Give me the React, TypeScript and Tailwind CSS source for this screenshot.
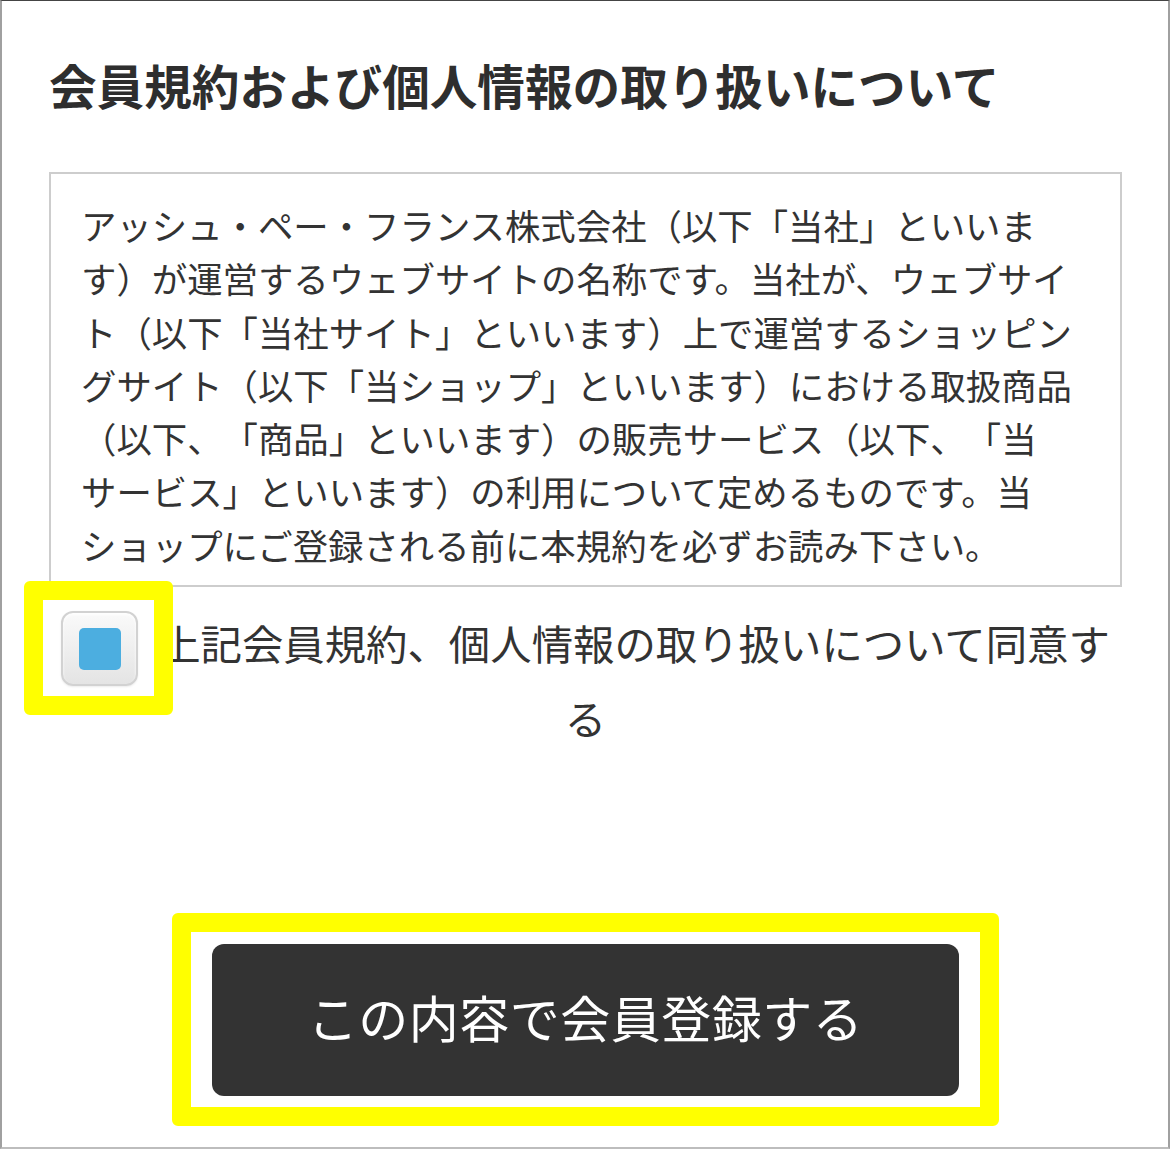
import React from "react";

// 会員登録フォーム末尾：規約表示・同意チェック・登録ボタン（注釈の黄色枠つき）
const FONT = "font-['Noto_Sans_CJK_JP','Noto_Sans',sans-serif]";

function YellowFrame({ className }: { className: string }) {
  // スクリーンショット上の注釈枠。内容の上に重ねるだけなので absolute。
  return (
    <span
      aria-hidden="true"
      className={`pointer-events-none absolute rounded-[6px] border-[19px] border-[#ffff00] ${className}`}
    />
  );
}

export default function App() {
  return (
    <div
      lang="ja"
      className={`${FONT} h-[1149px] w-full border-x-2 border-b-2 border-t border-[#a0a0a0] border-t-[#444] border-b-[#bdbdbd] bg-white text-[#333] [text-spacing-trim:space-all] [line-break:strict]`}
    >
      <div className="ml-[47px] mr-[46px] pt-[49px]">
        <h2 className="text-[47.6px] font-bold leading-[70px] tracking-normal text-[#2e2e2e]">
          会員規約および個人情報の取り扱いについて
        </h2>

        <div className="mt-[52px] h-[415px] overflow-hidden border-2 border-[#cdcdcd] pl-[30px] pr-[30px] pt-[24px]">
          <p lang="ja" className="text-[35.4px] leading-[53.3px] text-[#333] [line-break:strict]">
            アッシュ・ペー・フランス株式会社（以下「当社」といいます）が運営するウェブサイトの名称です。当社が、ウェブサイト（以下「当社サイト」といいます）上で運営するショッピングサイト（以下「当ショップ」といいます）における取扱商品（以下、「商品」といいます）の販売サービス（以下、「当サービス」といいます）の利用について定めるものです。当ショップにご登録される前に本規約を必ずお読み下さい。
          </p>
        </div>

        <label className="mt-[18px] block text-center text-[41.4px] leading-[75px] text-[#333]">
          <span className="relative -my-[20px] mr-[21px] inline-block h-[75px] w-[77px] align-middle">
            <YellowFrame className="-bottom-[29px] -left-[37px] -right-[35px] -top-[30px]" />
            <span className="flex h-full w-full items-center justify-center rounded-[12px] border-2 border-[#d2d2d2] bg-gradient-to-b from-[#fafafa] to-[#e4e4e4] shadow-[inset_0_2px_3px_rgba(255,255,255,0.9),0_1px_2px_rgba(0,0,0,0.08)]">
              <span className="h-[42px] w-[42px] rounded-[5px] bg-[#4caee0]" />
            </span>
          </span>
          上記会員規約、個人情報の取り扱いについて同意する
        </label>

        <div className="mt-[189px] flex justify-center">
          <div className="relative">
            <YellowFrame className="-bottom-[30px] -left-[40px] -right-[40px] -top-[31px]" />
            <button
              type="button"
              className="flex h-[152px] w-[747px] items-center justify-center rounded-[12px] bg-[#333] pb-[8px] text-[50px] font-normal leading-none tracking-[0.5px] text-white"
            >
              この内容で会員登録する
            </button>
          </div>
        </div>
      </div>
    </div>
  );
}
